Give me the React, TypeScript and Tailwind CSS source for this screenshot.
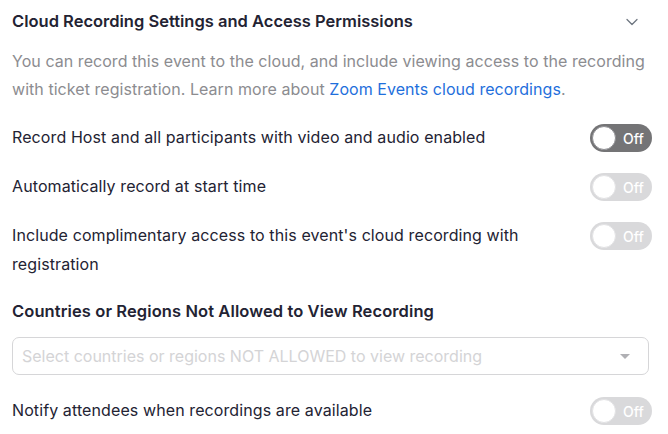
import { ChevronDown } from 'lucide-react';

function Toggle({ dark }: { dark?: boolean }) {
  return (
    <div
      className={`relative flex h-[28px] w-[62px] shrink-0 items-center rounded-full ${
        dark ? 'bg-[#747476]' : 'bg-[#d9d9db]'
      }`}
    >
      <div
        className={`absolute left-[2px] top-[2px] h-[24px] w-[24px] rounded-full bg-white border ${
          dark ? 'border-[#8e8e92]' : 'border-[#e2e2e4]'
        }`}
      />
      <span className="ml-[33px] text-[14px] font-medium text-white">Off</span>
    </div>
  );
}

function Row({ label, dark, className }: { label: React.ReactNode; dark?: boolean; className?: string }) {
  return (
    <div className={`flex items-start justify-between ${className || ''}`}>
      <p className="max-w-[540px] text-[16px] leading-[29px] tracking-[0.1px] text-[#232333]">{label}</p>
      <div className="pr-[4px] pt-[1px]">
        <Toggle dark={dark} />
      </div>
    </div>
  );
}

export default function App() {
  return (
    <div className="h-[434px] w-[668px] overflow-hidden bg-white px-[12px] font-['Inter',sans-serif]">
      {/* header */}
      <div className="flex h-[42px] items-center justify-between pt-[1px]">
        <h2 className="text-[16.5px] font-semibold text-[#232333]">
          Cloud Recording Settings and Access Permissions
        </h2>
        <ChevronDown className="mr-[14px] h-[20px] w-[20px] text-[#6e7680]" strokeWidth={1.5} />
      </div>

      <p className="mt-[5px] text-[16px] leading-[28px] tracking-[0.05px] text-[#8c8c90]">
        You can record this event to the cloud, and include viewing access to the recording with ticket
        registration. Learn more about <span className="text-[#1f6fdc]">Zoom Events cloud recordings</span>.
      </p>

      <Row className="mt-[20px]" label="Record Host and all participants with video and audio enabled" dark />
      <Row className="mt-[20px]" label="Automatically record at start time" />
      <Row
        className="mt-[20px]"
        label="Include complimentary access to this event's cloud recording with registration"
      />

      <h3 className="mt-[18px] text-[16.5px] font-semibold leading-[29px] tracking-[0.1px] text-[#232333]">
        Countries or Regions Not Allowed to View Recording
      </h3>

      <div className="mr-[7px] mt-[11px] flex h-[38px] items-center justify-between rounded-[7px] border border-[#d6d6d8] pl-[9px] pr-[18px]">
        <span className="text-[16px] text-[#d4d4d6]">Select countries or regions NOT ALLOWED to view recording</span>
        <span className="h-0 w-0 border-x-[5px] border-t-[5px] border-x-transparent border-t-[#b0b0b4]" />
      </div>

      <Row className="mt-[21px]" label="Notify attendees when recordings are available" />
    </div>
  );
}
